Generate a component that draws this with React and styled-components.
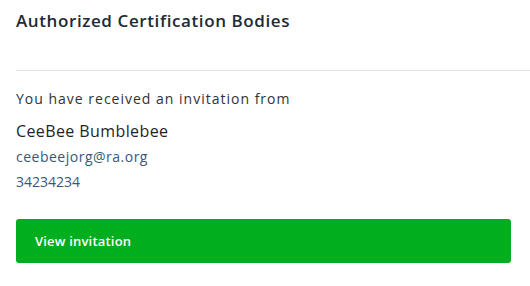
import React from 'react'
import styled, { createGlobalStyle } from 'styled-components'

const GlobalStyle = createGlobalStyle`
  html, body {
    margin: 0;
    padding: 0;
    background: #ffffff;
  }
  body {
    font-family: 'Open Sans', 'Liberation Sans', sans-serif;
  }
`

const Panel = styled.div`
  width: 530px;
  display: flex;
  flex-direction: column;
`

const Header = styled.div`
  padding-top: 9px;
  height: 71px;
  box-sizing: border-box;
  border-bottom: 1px solid #e2e1e8;
  margin-left: 16px;
`

const Title = styled.h2`
  margin: 0;
  font-size: 17px;
  line-height: 24px;
  font-weight: 600;
  letter-spacing: 0.6px;
  color: #1d2b34;
`

const Body = styled.div`
  padding: 16px 19px 0 16px;
  display: flex;
  flex-direction: column;
`

const Line = styled.div`
  font-size: ${({ size = 14 }) => size}px;
  letter-spacing: ${({ spacing = 0 }) => spacing}px;
  color: ${({ color = '#2f3338' }) => color};
  line-height: ${({ lh = 24 }) => lh}px;
  margin-bottom: ${({ mb = 0 }) => mb}px;
`

const Button = styled.button`
  margin-top: 25px;
  height: 44px;
  border: none;
  border-radius: 3px;
  background: #01ae1d;
  color: #ffffff;
  font-family: inherit;
  font-size: 13px;
  font-weight: 600;
  letter-spacing: 0.2px;
  text-align: left;
  padding: 0 19px;
  cursor: pointer;
`

const App = () => {
  return (
    <>
      <GlobalStyle />
      <Panel>
        <Header>
          <Title>Authorized Certification Bodies</Title>
        </Header>
        <Body>
          <Line mb={7} spacing={1}>
            You have received an invitation from
          </Line>
          <Line size={16} spacing={0.4} color="#1f2326" lh={26}>
            CeeBee Bumblebee
          </Line>
          <Line spacing={0.5} color="#35597a" lh={26}>
            ceebeejorg@ra.org
          </Line>
          <Line color="#35597a" lh={24}>
            34234234
          </Line>
          <Button>View invitation</Button>
        </Body>
      </Panel>
    </>
  )
}

export default App
